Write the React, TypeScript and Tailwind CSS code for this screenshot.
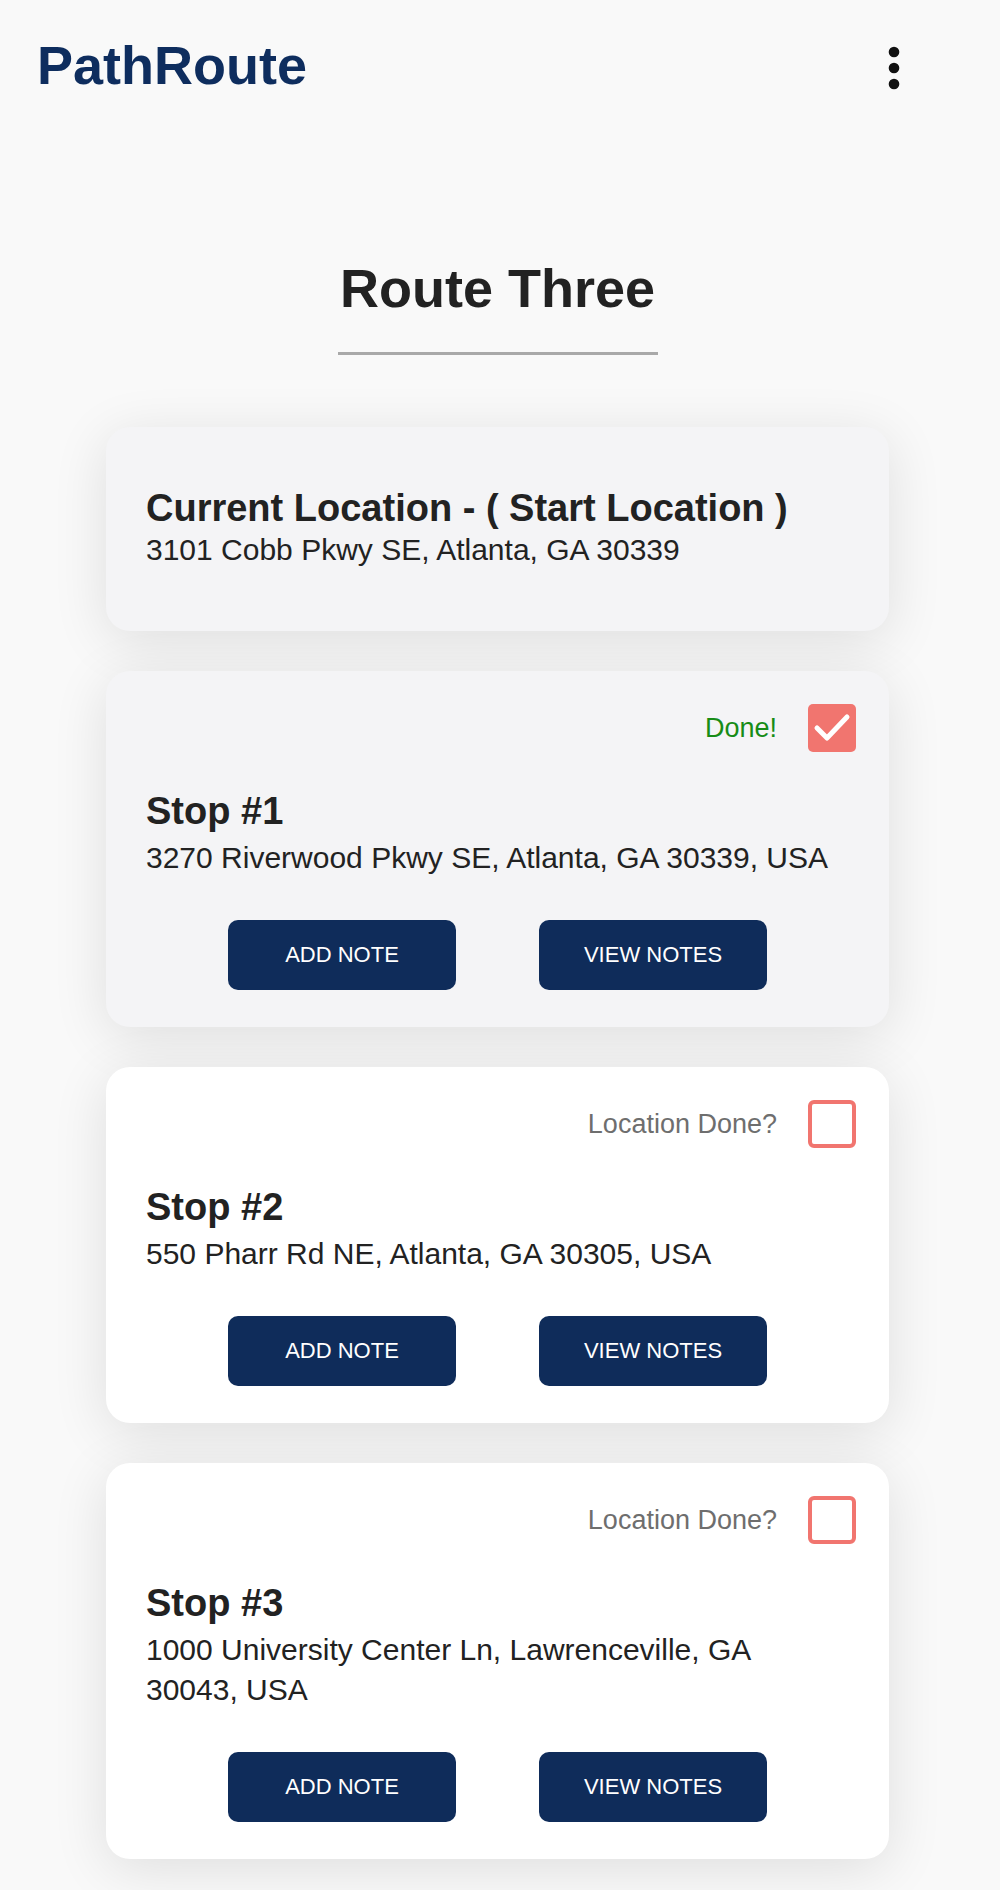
import React from "react";

const font = { fontFamily: '"Liberation Sans", Arial, Helvetica, sans-serif' };

function Checkbox({ checked }: { checked: boolean }) {
  if (checked) {
    return (
      <div className="w-[48px] h-[48px] rounded-[5px] bg-[#f1756f] flex items-center justify-center shrink-0">
        <svg width="48" height="48" viewBox="0 0 48 48" fill="none">
          <path d="M9 24 L19 34 L39 13" stroke="#ffffff" strokeWidth="5" strokeLinecap="round" strokeLinejoin="round" />
        </svg>
      </div>
    );
  }
  return <div className="w-[48px] h-[48px] rounded-[6px] border-[4px] border-[#f1756f] bg-white shrink-0" />;
}

function Buttons() {
  return (
    <div className="flex justify-center gap-[83px] mt-[42px] pr-[7px]">
      <button className="w-[228px] h-[70px] rounded-[10px] bg-[#0f2c5a] text-white text-[22px] leading-none uppercase">
        Add Note
      </button>
      <button className="w-[228px] h-[70px] rounded-[10px] bg-[#0f2c5a] text-white text-[22px] leading-none uppercase">
        View Notes
      </button>
    </div>
  );
}

function StopCard({
  n,
  address,
  done,
}: {
  n: number;
  address: string;
  done: boolean;
}) {
  return (
    <div
      className={
        "rounded-[24px] pl-[40px] pr-[33px] pt-[33px] pb-[37px] shadow-[0_10px_55px_rgba(0,0,0,0.11)] " +
        (done ? "bg-[#f4f4f6]" : "bg-white")
      }
    >
      <div className="flex justify-end items-center gap-[31px] h-[48px]">
        {done ? (
          <span className="text-[27px] text-[#178c17]">Done!</span>
        ) : (
          <span className="text-[27px] text-[#6e6e6e]">Location Done?</span>
        )}
        <Checkbox checked={done} />
      </div>
      <div className="pr-[7px]">
        <div className="mt-[37px] text-[38px] leading-[44px] font-bold text-[#222222]">Stop #{n}</div>
        <div className="mt-[5px] text-[30px] leading-[40px] text-[#222222]">{address}</div>
      </div>
      <Buttons />
    </div>
  );
}

export default function App() {
  return (
    <div className="min-h-[1890px] bg-[#f9f9f9]" style={font}>
      <div className="w-[995px]">
        <header className="flex justify-between items-start pt-[33px]">
          <div className="pl-[37px] text-[54px] leading-[64px] font-bold text-[#0e2d5e]">PathRoute</div>
          <div className="mr-[69px] mt-[3px]">
            <svg width="64" height="64" viewBox="0 0 24 24" fill="#111111">
              <circle cx="12" cy="6" r="2" />
              <circle cx="12" cy="12" r="2" />
              <circle cx="12" cy="18" r="2" />
            </svg>
          </div>
        </header>

        <div className="flex flex-col items-center mt-[156px]">
          <h1 className="text-[54px] leading-[64px] font-bold text-[#222222]">Route Three</h1>
          <div className="mt-[32px] w-[320px] h-[3px] bg-[#a9a9a9]" />
        </div>

        <div className="w-[783px] mx-auto mt-[72px] flex flex-col gap-[40px] pb-[30px]">
          <div className="rounded-[24px] bg-[#f4f4f6] pl-[40px] pr-[33px] pt-[59px] pb-[61px] shadow-[0_10px_55px_rgba(0,0,0,0.11)]">
            <div className="text-[38px] leading-[44px] font-bold text-[#222222]">Current Location - ( Start Location )</div>
            <div className="text-[30px] leading-[40px] text-[#222222]">3101 Cobb Pkwy SE, Atlanta, GA 30339</div>
          </div>
          <StopCard n={1} address="3270 Riverwood Pkwy SE, Atlanta, GA 30339, USA" done={true} />
          <StopCard n={2} address="550 Pharr Rd NE, Atlanta, GA 30305, USA" done={false} />
          <StopCard n={3} address="1000 University Center Ln, Lawrenceville, GA 30043, USA" done={false} />
        </div>
      </div>
    </div>
  );
}
